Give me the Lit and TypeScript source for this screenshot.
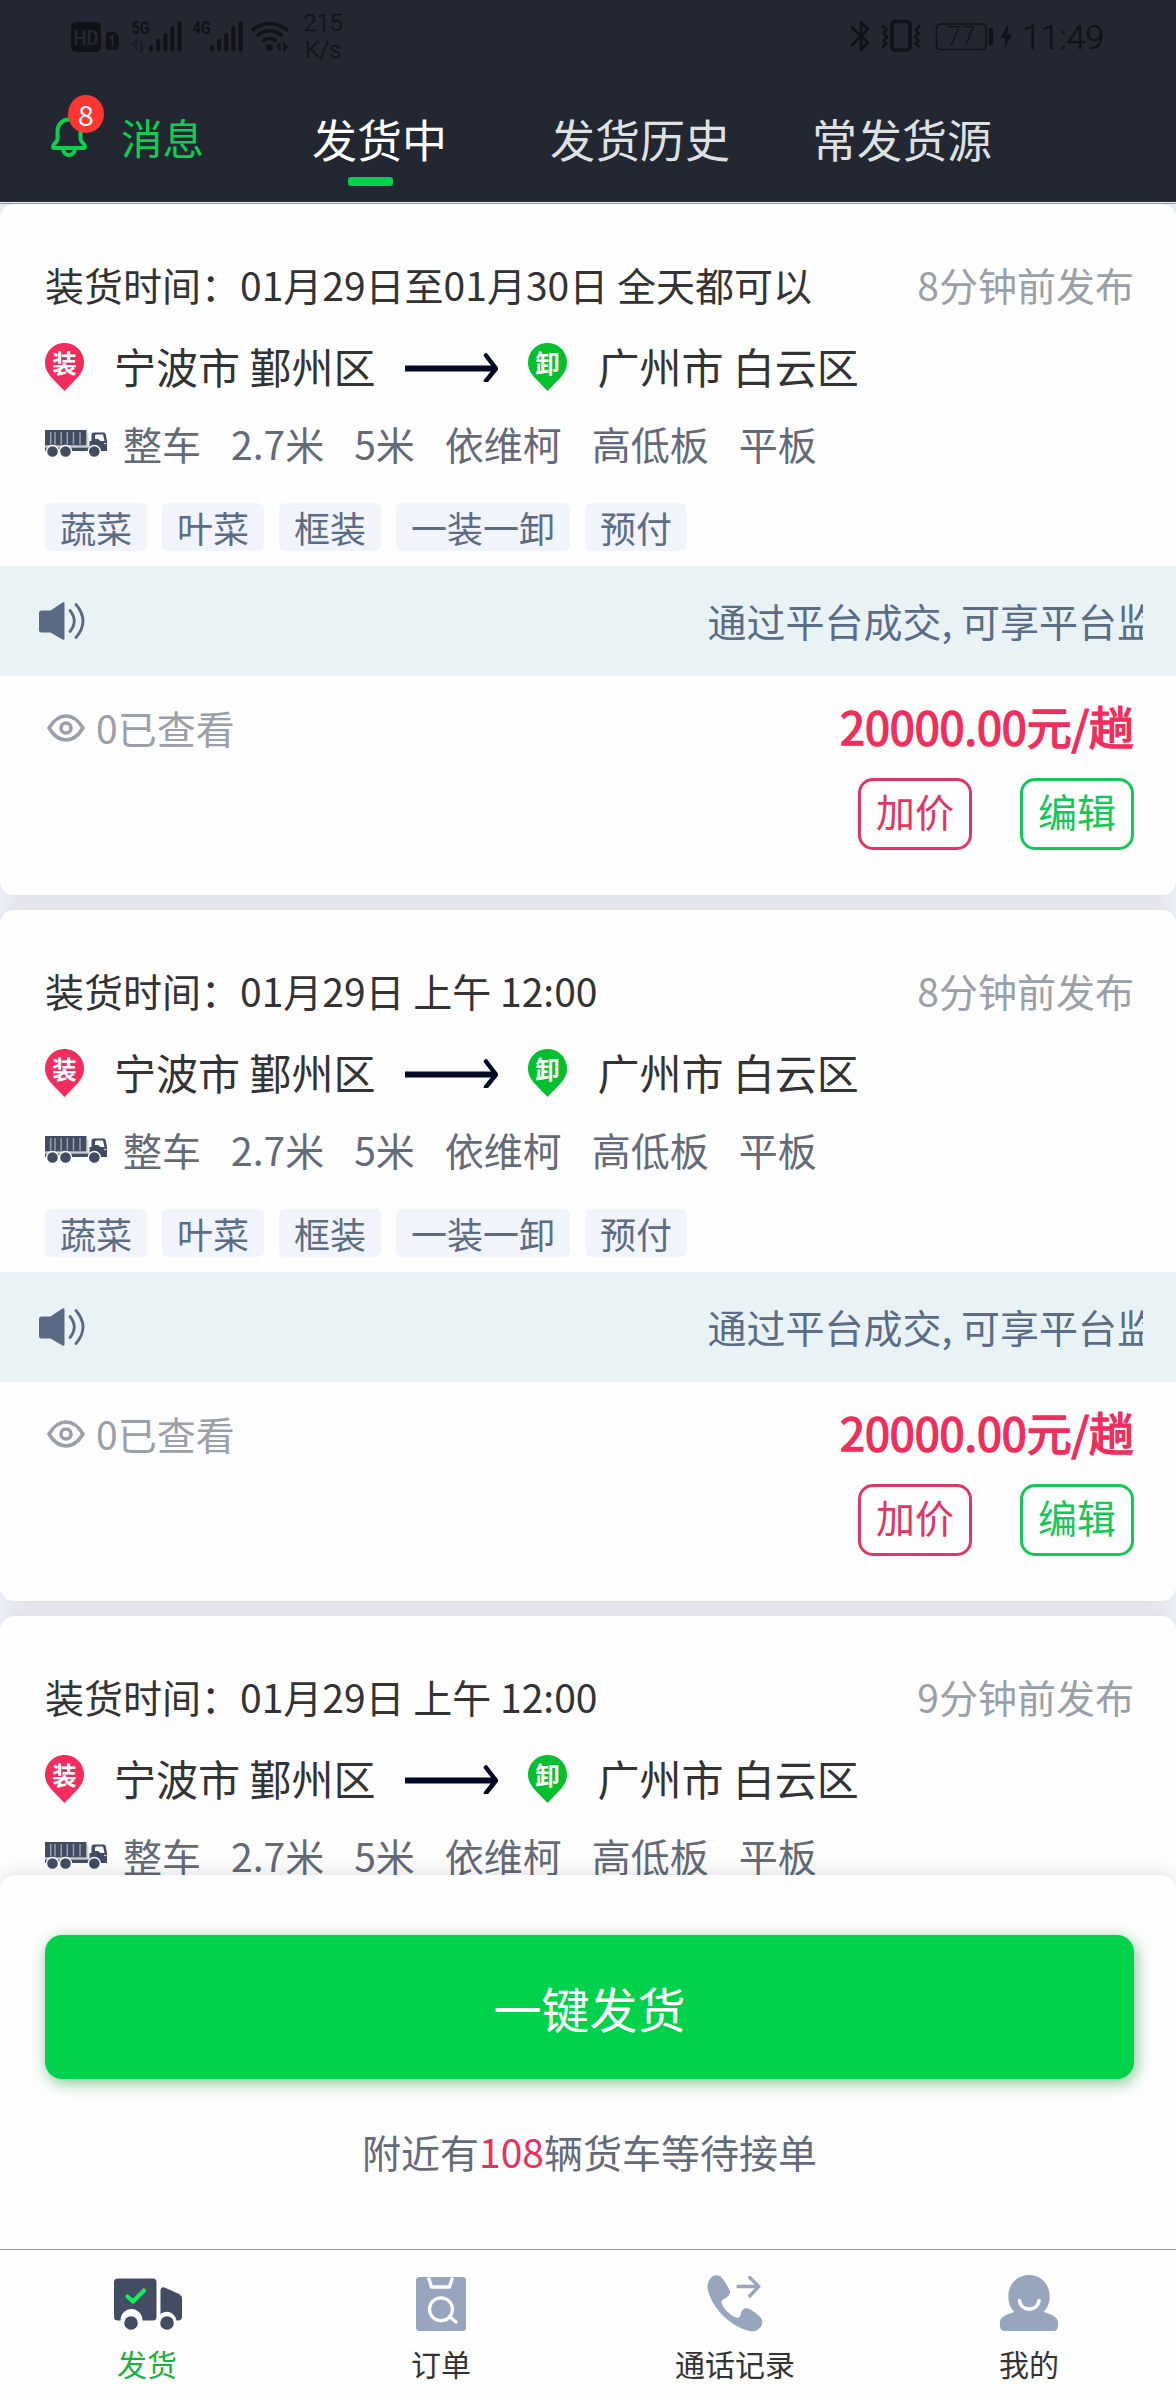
import { LitElement, html, css, svg } from "lit";
import { customElement, property } from "lit/decorators.js";

interface Cargo {
  time: string;
  published: string;
}

const CARGOS: Cargo[] = [
  { time: "01月29日至01月30日 全天都可以", published: "8分钟前发布" },
  { time: "01月29日 上午 12:00", published: "8分钟前发布" },
  { time: "01月29日 上午 12:00", published: "9分钟前发布" },
];
const SPECS = ["整车", "2.7米", "5米", "依维柯", "高低板", "平板"];
const TAGS = ["蔬菜", "叶菜", "框装", "一装一卸", "预付"];

@customElement("status-bar")
export class StatusBar extends LitElement {
  static styles = css`
    :host {
      display: flex;
      justify-content: space-between;
      height: 72px;
      padding: 0 72px 0 71px;
      color: #101217;
      font-family: Roboto, sans-serif;
    }
    .side {
      display: flex;
      align-items: flex-start;
    }
    svg {
      display: block;
    }
    .speed {
      margin: 10px 0 0 11px;
      width: 42px;
      font-size: 23.5px;
      line-height: 27px;
      text-align: center;
      font-weight: 300;
      -webkit-text-stroke: 0.3px currentColor;
    }
    .clock {
      margin: 17px 0 0 7px;
      font-size: 34px;
      line-height: 40px;
      letter-spacing: -0.1px;
      font-weight: 300;
      -webkit-text-stroke: 0.5px currentColor;
    }
  `;
  private bars(x: number) {
    return [0, 1, 2, 3, 4].map((i) => {
      const top = [45, 39, 33, 26, 21][i];
      return svg`<rect x=${x + i * 7.1} y=${top} width="4.2" height=${51.5 - top} rx="2" />`;
    });
  }
  render() {
    return html`
      <div class="side">
        <svg width="220" height="60" viewBox="71 0 220 60" fill="currentColor">
          <rect x="71" y="22" width="30" height="30" rx="5" />
          <text x="73.5" y="44.5" font-size="20" font-weight="700" textLength="25" lengthAdjust="spacingAndGlyphs" fill="#232731">HD</text>
          <path d="M106 35q0-3 3-3h6l4 4.5V47q0 3-3 3h-7q-3 0-3-3z" />
          <path d="M109.5 38.5l3-2V46.500" fill="none" stroke="#232731" stroke-width="1.800" />
          <text x="131.500" y="34" font-size="18.500" font-weight="700" textLength="18" lengthAdjust="spacingAndGlyphs">5G</text>
          <path d="M132 45l4-4.500V50.500M141 40.500V50.500l4-4.500" fill="none" stroke="#1a1d28" stroke-width="2.500" />
          ${this.bars(149)}
          <text x="192.500" y="34" font-size="18.500" font-weight="700" textLength="18" lengthAdjust="spacingAndGlyphs">4G</text>
          ${this.bars(210)}
          <g fill="none" stroke="currentColor" stroke-width="3.600" stroke-linecap="round">
            <path d="M253 29.500q16.500-12 33.500 0" />
            <path d="M258 35q11.500-8.500 23 0" />
            <path d="M263.500 40.500q6-4.500 12 0" />
          </g>
          <circle cx="269.500" cy="47.500" r="3.300" />
          <path d="M275.500 46.500l5-4.500v9h-2v-4.500zM283 42h1.500l.500 3.500h4l-5 6h-1z" />
        </svg>
        <div class="speed">215<br />K/s</div>
      </div>
      <div class="side">
        <svg width="164" height="60" viewBox="851.500 0 164 60" fill="none" stroke="currentColor" stroke-linejoin="round" stroke-linecap="round">
          <path d="M852 27l16.500 15.500L861.500 50V22l7 7L852 45.500" stroke-width="2.800" />
          <rect x="892.500" y="21.500" width="18" height="28.500" rx="3" stroke-width="3.600" />
          <path d="M883 26l4 3.500-3 4 3.500 3.500-3.500 4 3 2.500-3.500 3M920 26l-4 3.500 3 4-3.500 3.500 3.500 4-3 2.500 3.500 3" stroke-width="2.600" />
          <rect x="937" y="24" width="49.500" height="25.500" rx="4" stroke-width="1.600" />
          <path d="M991.500 30v13" stroke-width="4.500" />
          <text x="947.500" y="45" font-size="25" textLength="28" font-weight="300" fill="currentColor" stroke="none">77</text>
          <path d="M1009 24l-8.500 14h5.500l-1.500 11 8-14.500h-5z" fill="currentColor" stroke="none" />
        </svg>
        <div class="clock">11:49</div>
      </div>
    `;
  }
}

@customElement("top-tabs")
export class TopTabs extends LitElement {
  static styles = css`
    :host {
      display: flex;
      height: 130px;
      box-sizing: border-box;
      padding-left: 50px;
      color: #dfe0e2;
      font-size: 45px;
      line-height: 68px;
    }
    .message {
      display: flex;
      width: 262px;
      color: #0ccf50;
      font-size: 41.500px;
    }
    .bell {
      position: relative;
      width: 38px;
      margin: 45px 33px 0 0;
    }
    .bell svg {
      display: block;
    }
    .badge {
      position: absolute;
      left: 18px;
      top: -22px;
      width: 36px;
      height: 38px;
      border-radius: 50%;
      background: #fd3634;
      color: #fff;
      font-size: 28.500px;
      line-height: 38px;
      text-align: center;
    }
    .label {
      padding-top: 31px;
    }
    .tab {
      display: flex;
      flex-direction: column;
      padding-top: 33px;
    }
    .tab.active {
      color: #fff;
      width: 238px;
    }
    .tab.history {
      width: 262px;
    }
    .bar {
      width: 45px;
      height: 9px;
      margin: 4px 0 0 36px;
      border-radius: 3px;
      background: #00d34b;
    }
  `;
  render() {
    return html`
      <div class="message">
        <div class="bell">
          <svg width="38" height="41" viewBox="0 0 38 41" fill="none" stroke="currentColor" stroke-width="4">
            <path d="M19 2.500C12 2.500 7.500 8 7.500 14.500V22c0 3-4.500 5-4.500 7.500 0 1 .500 1.500 1.500 1.500h29c1 0 1.500-.500 1.500-1.500 0-2.500-4.500-4.500-4.500-7.500v-7.500C30.500 8 26 2.500 19 2.500z" stroke-linejoin="round" />
            <path d="M13 31.500a6 6.500 0 0 0 12 0" />
          </svg>
          <span class="badge">8</span>
        </div>
        <span class="label">消息</span>
      </div>
      <div class="tab active">发货中<span class="bar"></span></div>
      <div class="tab history">发货历史</div>
      <div class="tab">常发货源</div>
    `;
  }
}

@customElement("cargo-card")
export class CargoCard extends LitElement {
  @property({ attribute: false }) cargo!: Cargo;

  static styles = css`
    :host {
      display: flex;
      flex-direction: column;
      flex: none;
      height: 691px;
      box-sizing: border-box;
      padding-top: 51px;
      border-radius: 14px;
      background: #fefefe;
      box-shadow: 0 0 20px rgba(40, 44, 40, 0.14);
      color: #333;
      font-size: 39px;
    }
    svg {
      display: block;
      flex: none;
    }
    .row {
      display: flex;
      align-items: center;
      padding: 0 42px 0 45px;
      white-space: pre;
    }
    .head {
      justify-content: space-between;
      height: 58px;
    }
    .muted {
      color: #9a9fa8;
    }
    .route {
      height: 64px;
      margin-top: 22px;
      font-size: 42px;
      line-height: 60px;
    }
    .place {
      margin: -3px 30px 0 30px;
    }
    .arrow {
      margin-right: 30px;
    }
    .specs {
      height: 58px;
      margin-top: 15px;
      color: #646a78;
      gap: 30px;
    }
    .specs svg {
      margin: 2px -14px 0 0;
    }
    .tags {
      margin-top: 31px;
      gap: 15px;
      color: #5d6c86;
      font-size: 36px;
      line-height: 48px;
    }
    .tag {
      padding: 0 15px;
      border-radius: 6px;
      background: #f1f4fa;
    }
    .notice {
      display: flex;
      align-items: center;
      height: 110px;
      margin-top: 15px;
      padding: 0 33px 0 38px;
      background: #e9f3f6;
      color: #5b6c87;
    }
    .marquee {
      width: 435.500px;
      margin: -2px 0 0 auto;
      overflow: hidden;
      white-space: nowrap;
    }
    .foot {
      align-items: flex-start;
      justify-content: space-between;
      height: 102px;
      box-sizing: border-box;
      padding-top: 22px;
      line-height: 58px;
    }
    .views {
      display: flex;
      align-items: center;
      gap: 11px;
      padding-left: 2px;
    }
    .views svg {
      margin-top: 2px;
    }
    .price {
      margin-top: -1px;
      color: #ef2e5c;
      font-size: 45px;
      letter-spacing: -0.100px;
      -webkit-text-stroke: 1.500px #ef2e5c;
    }
    .actions {
      justify-content: flex-end;
      gap: 48px;
    }
    .action {
      width: 114px;
      height: 72px;
      box-sizing: border-box;
      border: 3px solid currentColor;
      border-radius: 15px;
      line-height: 58px;
      text-align: center;
    }
    .raise {
      color: #e03661;
    }
    .edit {
      color: #12c856;
    }
  `;
  private pin(char: string, color: string) {
    return html`<svg width="39" height="48" viewBox="0 0 39 48">
      <path d="M19.500 0C8.700 0 0 8.700 0 19.500c0 6 2.500 10 6 14.500L19.500 48 33 34c3.500-4.500 6-8.500 6-14.500C39 8.700 30.300 0 19.500 0z" fill=${color} />
      <text x="19.500" y="29.500" font-size="24.500" font-weight="700" text-anchor="middle" fill="#fff">${char}</text>
    </svg>`;
  }
  render() {
    return html`
      <div class="row head">
        <span>装货时间：${this.cargo.time}</span>
        <span class="muted">${this.cargo.published}</span>
      </div>
      <div class="row route">
        ${this.pin("装", "#f22c5d")}
        <span class="place">宁波市 鄞州区</span>
        <svg class="arrow" width="93" height="30" viewBox="0 0 93 30" fill="none" stroke="#020824" stroke-linecap="round" stroke-linejoin="round">
          <path d="M0 16.500h90" stroke-width="6" stroke-linecap="butt" />
          <path d="M81 3.500l10 13-10 12.500" stroke-width="4.500" />
        </svg>
        ${this.pin("卸", "#04c02f")}
        <span class="place">广州市 白云区</span>
      </div>
      <div class="row specs">
        <svg width="62" height="28" viewBox="0 0 62 28" fill="#414c63">
          <path d="M0 0h41.500v15.500H0z" />
          <path d="M5.700 2v12.500M10 2v12.500M16.200 2v12.500M22.300 2v12.500M28.500 2v12.500M35 2v12.500" stroke="#98a0af" stroke-width="1.500" />
          <path d="M0 17.500h44.500V11h2V5q0-2.500 2.500-2.500h9.500q2 0 2.300 2l1.200 6.500v10H0z" />
          <path d="M50 6q0-1.500 1.500-1.500h6.500l1.500 6.500h-4l-2.500-2h-3z" fill="#fefefe" />
          <path d="M42.800 3v13.500H0" fill="none" stroke="#c8ccd4" stroke-width="1.200" />
          <path d="M59 13.500h2.500" stroke="#d0d4da" stroke-width="1.200" />
          <g stroke="#fefefe" stroke-width="1.400">
            <circle cx="7.500" cy="21.500" r="6" />
            <circle cx="20.500" cy="21.500" r="6" />
            <circle cx="49.300" cy="21.500" r="6" />
          </g>
        </svg>
        ${SPECS.map((s) => html`<span>${s}</span>`)}
      </div>
      <div class="row tags">${TAGS.map((t) => html`<span class="tag">${t}</span>`)}</div>
      <div class="notice">
        <svg width="48" height="40" viewBox="0 0 48 40" fill="none" stroke="#5a6a84" stroke-linecap="round">
          <path d="M3.500 9.500h9L24.500 1.500q2-1 2 1v35q0 2-2 1L12.500 31.500h-9q-2.500 0-2.500-2.500V12q0-2.500 2.500-2.500z" fill="#5a6a84" stroke="none" />
          <path d="M32 9.500q8.500 10.500 0 21M38 3.500q14 16.500 0 33" stroke-width="2.800" />
        </svg>
        <div class="marquee">通过平台成交, 可享平台监管</div>
      </div>
      <div class="row foot">
        <div class="views muted">
          <svg width="38" height="28" viewBox="0 0 38 28" fill="none" stroke="#9a9fa8" stroke-width="3.600">
            <path d="M2 14C6.500 6.500 12 2 19 2s12.500 4.500 17 12c-4.500 7.500-10 12-17 12S6.500 21.500 2 14z" stroke-linejoin="round" />
            <circle cx="19" cy="14" r="5" />
          </svg>
          <span>0已查看</span>
        </div>
        <span class="price">20000.00元/趟</span>
      </div>
      <div class="row actions">
        <span class="action raise">加价</span>
        <span class="action edit">编辑</span>
      </div>
    `;
  }
}

@customElement("bottom-nav")
export class BottomNav extends LitElement {
  static styles = css`
    :host {
      position: relative;
      display: grid;
      grid-template-columns: repeat(4, 1fr);
      height: 151px;
      box-sizing: border-box;
      border-top: 1px solid #97979b;
      background: #fefefe;
      color: #333;
      font-size: 30px;
      line-height: 44px;
    }
    .item {
      display: flex;
      flex-direction: column;
      align-items: center;
      padding-top: 25px;
    }
    .item.active {
      color: #1bb13f;
    }
    .item.active svg {
      margin-left: 2px;
    }
    svg {
      display: block;
      margin-bottom: 8px;
    }
  `;
  render() {
    return html`
      <div class="item active">
        <svg width="68" height="58" viewBox="0 0 68 58" fill="#424c62">
          <path d="M4 3.500h35q3.500 0 3.500 3.500v35q0 3.500-3.500 3.500H28.500a11 11.500 0 0 0-22 0H4q-4 0-4-3.500V7q0-3.500 4-3.500zM46.500 16q0-4.500 4-3.500l13.500 6q4 2 4 4.500v18.500q0 4-4 4h-1.500a10 10.500 0 0 0-16-6.500z" />
          <circle cx="17" cy="48" r="6.800" />
          <circle cx="53" cy="48" r="6.800" />
          <path d="M13.500 21.500l5.500 5L30 15.500" fill="none" stroke="#14ef55" stroke-width="4.200" stroke-linecap="round" stroke-linejoin="round" />
        </svg>
        发货
      </div>
      <div class="item">
        <svg width="50" height="58" viewBox="0 0 50 58" fill="#97a5bf">
          <rect x="0" y="2" width="50" height="54" rx="3.500" />
          <g fill="none" stroke="#fefefe" stroke-linecap="round" stroke-linejoin="round">
            <path d="M12.500 2.500l3 9.500h18l3-9.500" stroke-width="3.400" stroke-linecap="butt" />
            <ellipse cx="25" cy="34.300" rx="11.500" ry="11.500" stroke-width="3.200" />
            <path d="M33.500 41.500l6.500 5.500" stroke-width="3.200" />
          </g>
        </svg>
        订单
      </div>
      <div class="item">
        <svg width="56" height="58" viewBox="0 0 56 58" fill="#97a5bf">
          <path d="M3.500 3.500C6-.5 12-.8 15 3c3 3.500 5.500 8 7.500 12 1.500 3-.5 6-3 7.500-2.500 1.500-6 3-5 5.500 2 6 9 12.500 14.500 14.500 3.500 1 4.500-1.500 5-4.500 1-4 3.500-5.500 7-4.500 5 2 9.500 5.500 13 9.500 3 4 .5 9-3 11.500-3 2.500-8 2-12 .5C20.500 49 3.500 31 .5 12.500.2 9 1.500 6 3.500 3.500z" />
          <path d="M31 11.500h21M42.800 2.500l9 9-9 9.500" fill="none" stroke="#97a5bf" stroke-width="3.300" stroke-linecap="round" stroke-linejoin="round" />
        </svg>
        通话记录
      </div>
      <div class="item">
        <svg width="58" height="58" viewBox="0 0 58 58" fill="#97a5bf">
          <path d="M29 0C17 0 8.300 9 8.300 21.500c0 6.500 2 11.500 6 15.500C8 39 0 41.500 0 47v4q0 5 5 5h48q5 0 5-5v-4c0-5.500-8-8-14.500-10 4-4 6.200-9 6.200-15.500C49.700 9 41 0 29 0z" />
          <path d="M19.500 25.500c1.500 11.500 18 11.500 19.500 0" fill="none" stroke="#fefefe" stroke-width="3.600" stroke-linecap="round" />
        </svg>
        我的
      </div>
    `;
  }
}

@customElement("app-root")
export class AppRoot extends LitElement {
  static styles = css`
    :host {
      display: flex;
      flex-direction: column;
      width: 1176px;
      height: 2400px;
      overflow: hidden;
      background: #f1f4fa;
      font-family: "Noto Sans CJK SC", sans-serif;
    }
    .header {
      flex: none;
      background: #232731;
      border-bottom: 1px solid #f2f2fa;
    }
    .feed {
      display: flex;
      flex-direction: column;
      flex: none;
      height: 1692px;
      box-sizing: border-box;
      gap: 15px;
      overflow: hidden;
      border-top: 1px solid #8b8c9e;
    }
    .panel {
      position: relative;
      flex: none;
      height: 374px;
      box-sizing: border-box;
      margin-top: -20px;
      padding: 60px 42px 0 45px;
      border-radius: 15px 15px 0 0;
      background: #fefefe;
      box-shadow: 0 0 20px rgba(0, 0, 0, 0.15);
    }
    .publish {
      height: 144px;
      border-radius: 17px;
      background: #00d34b;
      box-shadow: 2px 4px 16px rgba(0, 140, 40, 0.5);
      color: #fff;
      font-size: 48px;
      line-height: 144px;
      text-align: center;
    }
    .nearby {
      margin-top: 42px;
      color: #646a78;
      font-size: 39px;
      line-height: 60px;
      text-align: center;
    }
    .count {
      color: #e83160;
    }
  `;
  render() {
    return html`
      <div class="header">
        <status-bar></status-bar>
        <top-tabs></top-tabs>
      </div>
      <div class="feed">${CARGOS.map((c) => html`<cargo-card .cargo=${c}></cargo-card>`)}</div>
      <div class="panel">
        <div class="publish">一键发货</div>
        <div class="nearby">附近有<span class="count">108</span>辆货车等待接单</div>
      </div>
      <bottom-nav></bottom-nav>
    `;
  }
}
